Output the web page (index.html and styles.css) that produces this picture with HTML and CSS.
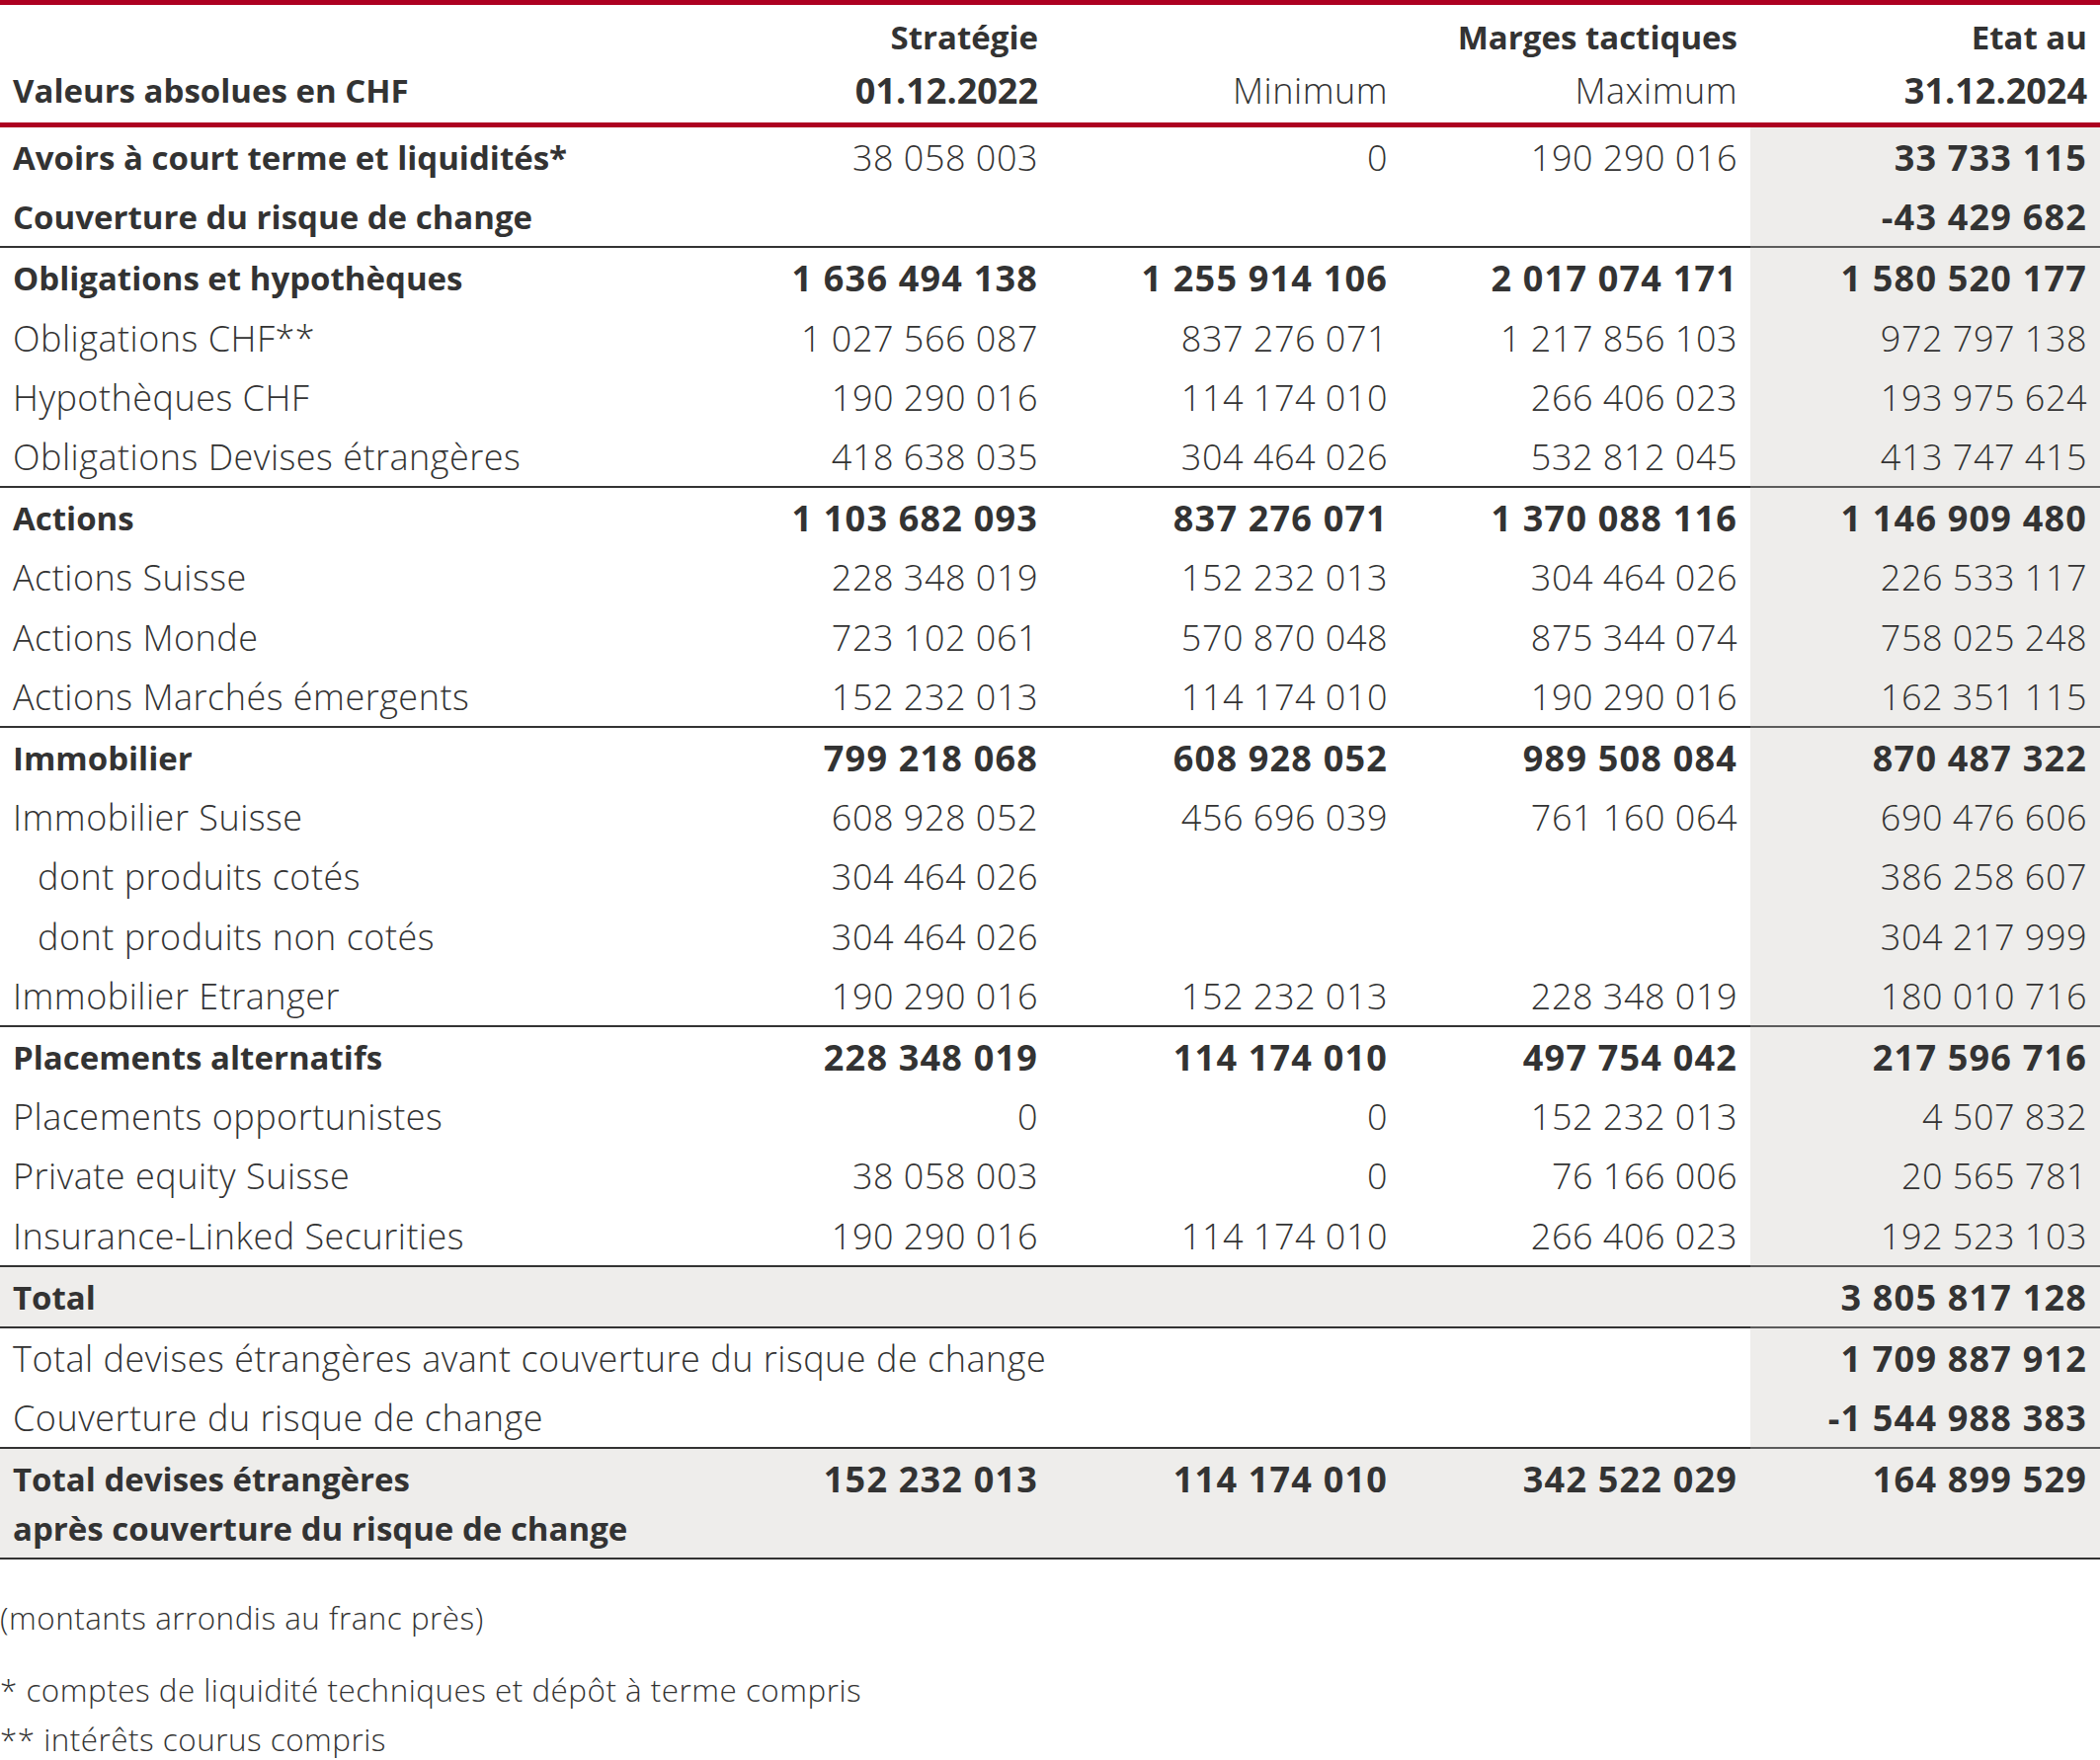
FILE: index.html
```html
<!DOCTYPE html>
<html lang="fr">
<head>
<meta charset="utf-8">
<title>Valeurs absolues en CHF</title>
<link rel="stylesheet" href="styles.css">
</head>
<body>
<table class="alloc">
  <colgroup>
    <col class="c-lbl"><col class="c-num"><col class="c-num"><col class="c-num"><col class="c-num">
  </colgroup>
  <thead>
    <tr class="h1">
      <th class="lbl"></th><th class="num b txt">Stratégie</th><th class="num"></th><th class="num b txt">Marges tactiques</th><th class="num b txt">Etat au</th>
    </tr>
    <tr class="h2">
      <th class="lbl b">Valeurs absolues en CHF</th><th class="num b date">01.12.2022</th><th class="num l">Minimum</th><th class="num l">Maximum</th><th class="num b date">31.12.2024</th>
    </tr>
  </thead>
  <tbody>
    <tr><td class="lbl b">Avoirs à court terme et liquidités*</td><td class="num">38 058 003</td><td class="num">0</td><td class="num">190 290 016</td><td class="num etat b">33 733 115</td></tr>
    <tr><td class="lbl b">Couverture du risque de change</td><td class="num"></td><td class="num"></td><td class="num"></td><td class="num etat b">-43 429 682</td></tr>

    <tr class="sep bold"><td class="lbl">Obligations et hypothèques</td><td class="num">1 636 494 138</td><td class="num">1 255 914 106</td><td class="num">2 017 074 171</td><td class="num etat">1 580 520 177</td></tr>
    <tr><td class="lbl">Obligations CHF**</td><td class="num">1 027 566 087</td><td class="num">837 276 071</td><td class="num">1 217 856 103</td><td class="num etat">972 797 138</td></tr>
    <tr><td class="lbl">Hypothèques CHF</td><td class="num">190 290 016</td><td class="num">114 174 010</td><td class="num">266 406 023</td><td class="num etat">193 975 624</td></tr>
    <tr><td class="lbl">Obligations Devises étrangères</td><td class="num">418 638 035</td><td class="num">304 464 026</td><td class="num">532 812 045</td><td class="num etat">413 747 415</td></tr>

    <tr class="sep bold"><td class="lbl">Actions</td><td class="num">1 103 682 093</td><td class="num">837 276 071</td><td class="num">1 370 088 116</td><td class="num etat">1 146 909 480</td></tr>
    <tr><td class="lbl">Actions Suisse</td><td class="num">228 348 019</td><td class="num">152 232 013</td><td class="num">304 464 026</td><td class="num etat">226 533 117</td></tr>
    <tr><td class="lbl">Actions Monde</td><td class="num">723 102 061</td><td class="num">570 870 048</td><td class="num">875 344 074</td><td class="num etat">758 025 248</td></tr>
    <tr><td class="lbl">Actions Marchés émergents</td><td class="num">152 232 013</td><td class="num">114 174 010</td><td class="num">190 290 016</td><td class="num etat">162 351 115</td></tr>

    <tr class="sep bold"><td class="lbl">Immobilier</td><td class="num">799 218 068</td><td class="num">608 928 052</td><td class="num">989 508 084</td><td class="num etat">870 487 322</td></tr>
    <tr><td class="lbl">Immobilier Suisse</td><td class="num">608 928 052</td><td class="num">456 696 039</td><td class="num">761 160 064</td><td class="num etat">690 476 606</td></tr>
    <tr><td class="lbl ind">dont produits cotés</td><td class="num">304 464 026</td><td class="num"></td><td class="num"></td><td class="num etat">386 258 607</td></tr>
    <tr><td class="lbl ind">dont produits non cotés</td><td class="num">304 464 026</td><td class="num"></td><td class="num"></td><td class="num etat">304 217 999</td></tr>
    <tr><td class="lbl">Immobilier Etranger</td><td class="num">190 290 016</td><td class="num">152 232 013</td><td class="num">228 348 019</td><td class="num etat">180 010 716</td></tr>

    <tr class="sep bold"><td class="lbl">Placements alternatifs</td><td class="num">228 348 019</td><td class="num">114 174 010</td><td class="num">497 754 042</td><td class="num etat">217 596 716</td></tr>
    <tr><td class="lbl">Placements opportunistes</td><td class="num">0</td><td class="num">0</td><td class="num">152 232 013</td><td class="num etat">4 507 832</td></tr>
    <tr><td class="lbl">Private equity Suisse</td><td class="num">38 058 003</td><td class="num">0</td><td class="num">76 166 006</td><td class="num etat">20 565 781</td></tr>
    <tr><td class="lbl">Insurance-Linked Securities</td><td class="num">190 290 016</td><td class="num">114 174 010</td><td class="num">266 406 023</td><td class="num etat">192 523 103</td></tr>

    <tr class="sep bold shade"><td class="lbl">Total</td><td class="num"></td><td class="num"></td><td class="num"></td><td class="num etat">3 805 817 128</td></tr>

    <tr class="sep"><td class="lbl">Total devises étrangères avant couverture du risque de change</td><td class="num"></td><td class="num"></td><td class="num"></td><td class="num etat b">1 709 887 912</td></tr>
    <tr><td class="lbl">Couverture du risque de change</td><td class="num"></td><td class="num"></td><td class="num"></td><td class="num etat b">-1 544 988 383</td></tr>

    <tr class="sep bold shade last"><td class="lbl">Total devises étrangères<br>après couverture du risque de change</td><td class="num">152 232 013</td><td class="num">114 174 010</td><td class="num">342 522 029</td><td class="num etat">164 899 529</td></tr>
  </tbody>
</table>

<div class="notes">
  <p class="round">(montants arrondis au franc près)</p>
  <p>* comptes de liquidité techniques et dépôt à terme compris</p>
  <p>** intérêts courus compris</p>
</div>
</body>
</html>
```

FILE: styles.css
```css
html, body {
  margin: 0;
  padding: 0;
  background: #ffffff;
}

body {
  font-family: "Open Sans", "Noto Sans", sans-serif;
  font-weight: 300;
  color: #333333;
  font-size: 36px;
  letter-spacing: 0.5px;
}

.alloc {
  width: 2126px;
  border-collapse: collapse;
  table-layout: fixed;
  border-top: 5px solid #ad0021;
}

.c-lbl { width: 710px; }
.c-num { width: 354px; }

.alloc th,
.alloc td {
  padding: 6px 13px 4px;
  line-height: 50.2px;
  white-space: nowrap;
  font-weight: 300;
  vertical-align: top;
}

.alloc thead th {
  line-height: 54px;
}

.alloc .h1 th { padding-top: 6px; padding-bottom: 0; }
.alloc .h2 th { padding-top: 0; padding-bottom: 5px; border-bottom: 5px solid #ad0021; }

.alloc .lbl { text-align: left; }
.alloc .num { text-align: right; }
.alloc .ind { padding-left: 38px; }

.alloc .b,
.alloc .bold td {
  font-weight: 700;
}

/* bold words: a touch smaller so they stay as narrow as the reference */
.alloc .lbl.b,
.alloc .bold td.lbl,
.alloc .txt {
  font-size: 33px;
  letter-spacing: 0;
}

/* bold figures: wider tracking */
.alloc td.num.b,
.alloc .bold td.num {
  letter-spacing: 1.2px;
}

.alloc .date { letter-spacing: 0; }

.alloc .l { font-weight: 300; }

.alloc .etat { background: #eeedeb; }

.alloc .shade td { background: #eeedeb; }

.alloc .sep td { border-top: 2px solid #333333; }
.alloc .sep td.etat { border-top-color: #5c5c5c; }

.alloc .last td { border-bottom: 2px solid #333333; line-height: 50px; }

.notes {
  font-size: 31.4px;
  line-height: 50px;
  padding-top: 34px;
}

.notes p { margin: 0; }
.notes .round { margin-bottom: 23px; }
```
